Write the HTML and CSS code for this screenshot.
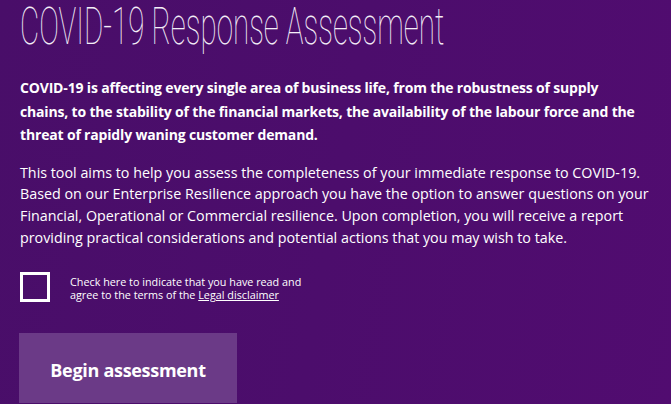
FILE: index.html
```html
<!DOCTYPE html>
<html>
<head>
    <meta http-equiv="Content-Type" content="text/html; charset=utf-8" />
    <title>COVID-19 Response Assessment</title>
    <link rel="stylesheet" href="styles.css">
</head>

<body>
<div class="intro">
    <h1 class="intro_title"><span>COVID-19 Response Assessment</span></h1>
    <p class="intro_lead">COVID-19 is affecting every single area of business life, from the robustness of supply chains, to the stability of the financial markets, the availability of the labour force and the threat of rapidly waning customer demand.</p>
    <p class="intro_text">This tool aims to help you assess the completeness of your immediate response to COVID-19. Based on our Enterprise Resilience approach you have the option to answer questions on your Financial, Operational or Commercial resilience. Upon completion, you will receive a report providing practical considerations and potential actions that you may wish to take.</p>
    <label class="agree">
        <span class="agree_box"></span>
        <span class="agree_text">Check here to indicate that you have read and agree to the terms of the <a href="javascript:;">Legal disclaimer</a></span>
    </label>
    <a href="javascript:;" class="btn_begin">Begin assessment</a>
</div>
</body>
</html>
```
FILE: styles.css
```css
*{margin:0;padding:0;}
html,body{height:100%;}
body{
    background:#4b0d6b;
    background:linear-gradient(100deg, #490e69 0%, #4c0d6c 50%, #510c70 100%);
    color:#fff;
    font-family:"Open Sans",sans-serif;
    overflow:hidden;
}
.intro{
    padding:0 20px;
    width:631px;
}
.intro_title{
    height:54px;
    overflow:hidden;
    font:100 51px/54px Roboto,sans-serif;
    white-space:nowrap;
    color:#f4eef8;
}
.intro_title span{
    display:inline-block;
    transform:scaleX(0.58);
    transform-origin:0 0;
}
.intro_lead{
    width:618px;
    margin-top:22px;
    font-size:14px;
    font-weight:700;
    line-height:23.5px;
    letter-spacing:-0.17px;
}
.intro_text{
    margin-top:15px;
    font-size:14.3px;
    line-height:21.7px;
}
.agree{
    display:flex;
    align-items:flex-start;
    margin-top:24px;
    cursor:pointer;
}
.agree_box{
    flex:none;
    width:24px;
    height:24px;
    border:3px solid #fff;
}
.agree_text{
    width:250px;
    margin:3px 0 0 20px;
    font-size:10.8px;
    line-height:13px;
}
.agree_text a{color:#fff;text-decoration:underline;}
.btn_begin{
    display:block;
    width:218px;
    height:70px;
    margin:31px 0 0 -1px;
    background:#6b3a87;
    color:#fff;
    font-size:18px;
    font-weight:700;
    line-height:74px;
    text-align:center;
    text-decoration:none;
    letter-spacing:-0.3px;
}
```
